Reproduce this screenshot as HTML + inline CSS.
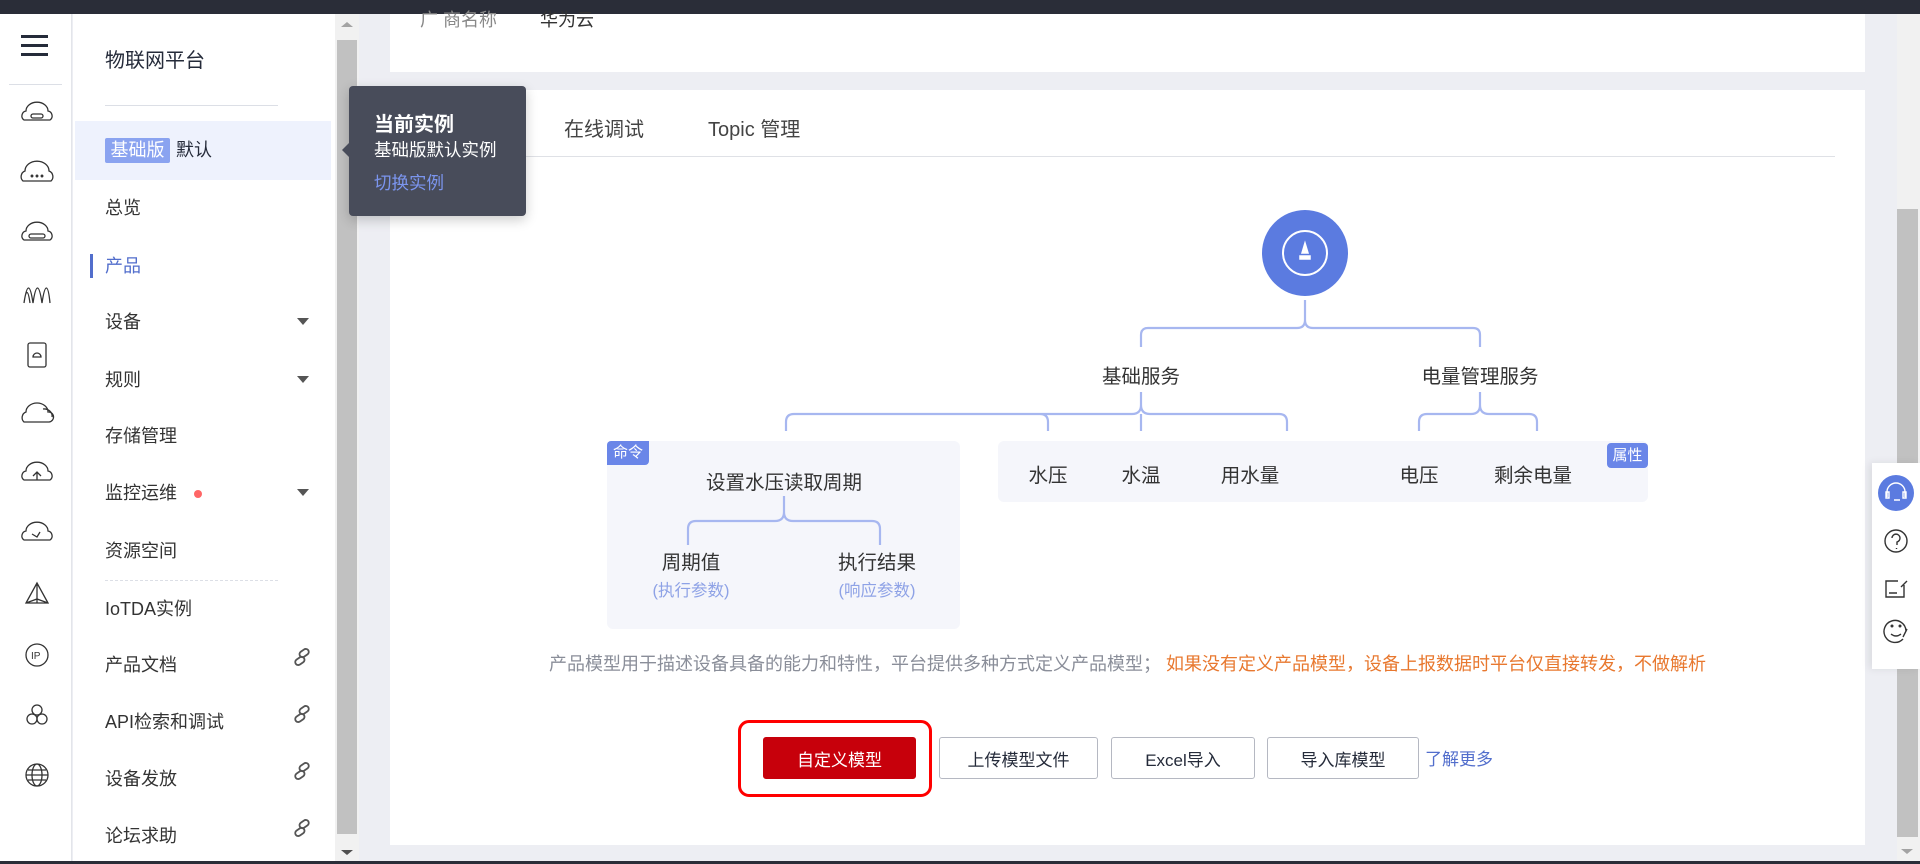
<!DOCTYPE html>
<html><head><meta charset="utf-8"><style>
*{margin:0;padding:0;box-sizing:border-box}
body{width:1920px;height:864px;overflow:hidden;background:#edeef3;font-family:"Liberation Sans","Noto Sans CJK SC",sans-serif;color:#333;position:relative}
.a{position:absolute}
.nav div.it{position:absolute;left:105px;font-size:18px;color:#333;line-height:24px}
.caret{position:absolute;left:297px;width:0;height:0;border-left:6px solid transparent;border-right:6px solid transparent;border-top:7px solid #555}
.btn{position:absolute;top:737px;height:42px;border:1px solid #b5b8c2;border-radius:3px;background:#fff;font-size:17px;color:#252b3a;display:flex;align-items:center;justify-content:center}
.t{position:absolute;font-size:19.5px;color:#333;white-space:nowrap;transform:translateX(-50%)}
</style></head><body>
<div class="a" style="left:0;top:0;width:1920px;height:14px;background:#2a2d38"></div>
<div class="a" style="left:0;top:861px;width:1920px;height:3px;background:#2a2d38"></div>
<!-- icon rail -->
<div class="a" style="left:0;top:14px;width:72px;height:847px;background:#fff;border-right:1px solid #e3e5ea"></div>
<div class="a" style="left:21px;top:35px;width:27px;height:3px;background:#252b3a;box-shadow:0 9px 0 #252b3a,0 18px 0 #252b3a"></div>
<div class="a" style="left:9px;top:84px;width:53px;height:1px;background:#dcdfe6"></div>
<svg class="a" style="left:0;top:0" width="72" height="864" fill="none" stroke="#333" stroke-width="1.3">
<g transform="translate(37,115)"><path d="M-13,5 a5,5 0 0 1 2,-9 a10,8 0 0 1 22,0 a5,5 0 0 1 2,9 z"/><rect x="-6" y="-1" width="12" height="4" rx="2"/></g>
<g transform="translate(37,175)"><path d="M-14,6 a6,6 0 0 1 2,-10 a11,9 0 0 1 24,0 a6,6 0 0 1 2,10 z"/><circle cx="-5" cy="1" r=".8"/><circle cx="0" cy="1" r=".8"/><circle cx="5" cy="1" r=".8"/></g>
<g transform="translate(37,235)"><path d="M-13,5 a5,5 0 0 1 2,-9 a10,8 0 0 1 22,0 a5,5 0 0 1 2,9 z"/><rect x="-8" y="-1" width="16" height="4" rx="2"/></g>
<g transform="translate(37,295)"><path d="M-13,8 C-10,-12 -7,-12 -4,8 C-1,-12 2,-12 5,8 C8,-12 11,-12 13,8 M-13,8 C-11,-6 -9,-6 -7,8"/></g>
<g transform="translate(37,355)"><rect x="-9" y="-12" width="18" height="24" rx="2"/><path d="M-4,2 a3,3 0 0 1 8,0 z"/></g>
<g transform="translate(37,415)"><path d="M-13,7 a6,6 0 0 1 2,-10 a11,9 0 0 1 22,0 a5,5 0 0 1 1,10 z M6,-6 a8,7 0 0 1 9,8"/></g>
<g transform="translate(37,475)"><path d="M-13,5 a5,5 0 0 1 2,-9 a10,8 0 0 1 22,0 a5,5 0 0 1 2,9 z M0,5 v-7 M-4,1 l4,-4 l4,4"/></g>
<g transform="translate(37,535)"><path d="M-13,5 a5,5 0 0 1 2,-9 a10,8 0 0 1 22,0 a5,5 0 0 1 2,9 z M-5,-1 l5,3 l3,-5"/></g>
<g transform="translate(37,595)"><path d="M0,-12 L-11,8 L11,8 Z M0,-12 V8 M-11,8 L0,4 L11,8"/></g>
<g transform="translate(37,655)"><circle r="11"/><text x="-6" y="4" font-size="10" fill="#333" stroke="none" font-family="Liberation Sans">IP</text></g>
<g transform="translate(37,715)"><circle cx="0" cy="-5" r="5"/><circle cx="-5" cy="4" r="5"/><circle cx="5" cy="4" r="5"/></g>
<g transform="translate(37,775)"><circle r="11"/><ellipse rx="5" ry="11"/><path d="M-11,0 H11 M-9,-5 H9 M-9,5 H9"/></g>
</svg>
<!-- nav panel -->
<div class="a nav" style="left:73px;top:14px;width:262px;height:847px;background:#fff">
</div>
<div class="nav">
<div class="a" style="left:105px;top:44px;font-size:20px;color:#252b3a">物联网平台</div>
<div class="a" style="left:105px;top:105px;width:173px;height:1px;background:#dcdfe6"></div>
<div class="a" style="left:75px;top:121px;width:256px;height:59px;background:#eef2fd"></div>
<div class="a" style="left:105px;top:138px;width:65px;height:25px;background:#8aa3f0;border-radius:2px;color:#fff;font-size:18px;text-align:center;line-height:25px">基础版</div>
<div class="a" style="left:176px;top:138px;font-size:18px;line-height:25px;color:#252b3a">默认</div>
<div class="it" style="top:196px">总览</div>
<div class="a" style="left:90px;top:254px;width:3px;height:24px;background:#526ecc"></div>
<div class="it" style="top:254px;color:#526ecc">产品</div>
<div class="it" style="top:310px">设备</div><div class="caret" style="top:318px"></div>
<div class="it" style="top:368px">规则</div><div class="caret" style="top:376px"></div>
<div class="it" style="top:424px">存储管理</div>
<div class="it" style="top:481px">监控运维</div><div class="a" style="left:194px;top:490px;width:8px;height:8px;border-radius:50%;background:#f66"></div><div class="caret" style="top:489px"></div>
<div class="it" style="top:539px">资源空间</div>
<div class="a" style="left:105px;top:580px;width:173px;border-top:1px dashed #dcdfe6"></div>
<div class="it" style="top:597px">IoTDA实例</div>
<div class="it" style="top:653px">产品文档</div>
<div class="it" style="top:710px">API检索和调试</div>
<div class="it" style="top:767px">设备发放</div>
<div class="it" style="top:824px">论坛求助</div>
<svg class="a" style="left:290px;top:0" width="24" height="864" fill="none" stroke="#555" stroke-width="1.8">
<g id="lk" transform="translate(12,657)"><rect x="-9" y="-1" width="10" height="6" rx="3" transform="rotate(-35)"/><rect x="-1" y="-5" width="10" height="6" rx="3" transform="rotate(-35)"/></g>
<use href="#lk" y="57"/><use href="#lk" y="114"/><use href="#lk" y="171"/>
</svg>
</div>
<!-- left scrollbar -->
<div class="a" style="left:335px;top:14px;width:24px;height:847px;background:#f1f1f1"></div>
<div class="a" style="left:337px;top:40px;width:20px;height:794px;background:#c1c1c1"></div>
<div class="a" style="left:341px;top:22px;border-left:6px solid transparent;border-right:6px solid transparent;border-bottom:5px solid #a3a3a3"></div>
<div class="a" style="left:341px;top:850px;border-left:6px solid transparent;border-right:6px solid transparent;border-top:5px solid #505050"></div>
<!-- cards -->
<div class="a" style="left:390px;top:14px;width:1475px;height:58px;background:#fff"></div>
<div class="a" style="left:420px;top:6px;font-size:18px;color:#888">广 商名称</div>
<div class="a" style="left:540px;top:6px;font-size:18px;color:#333">华为云</div>
<div class="a" style="left:390px;top:90px;width:1475px;height:755px;background:#fff"></div>
<div class="a" style="left:564px;top:113px;font-size:20px;color:#444">在线调试</div>
<div class="a" style="left:708px;top:113px;font-size:20px;color:#444">Topic 管理</div>
<div class="a" style="left:390px;top:156px;width:1445px;height:1px;background:#dfe1e6"></div>
<!-- tree -->
<div class="a" style="left:607px;top:441px;width:353px;height:188px;background:#f5f6fb;border-radius:6px"></div>
<div class="a" style="left:607px;top:441px;width:42px;height:24px;background:#6a86e8;border-radius:4px 0 4px 0;color:#fff;font-size:15px;text-align:center;line-height:24px">命令</div>
<div class="a" style="left:998px;top:441px;width:650px;height:61px;background:#f5f6fb;border-radius:6px"></div>
<div class="a" style="left:1607px;top:443px;width:41px;height:25px;background:#6a86e8;border-radius:4px;color:#fff;font-size:15px;text-align:center;line-height:25px">属性</div>
<svg class="a" style="left:0;top:0" width="1920" height="864" fill="none" stroke="#a7b7f0" stroke-width="2.2">
<circle cx="1305" cy="253" r="43" fill="#5b7be0" stroke="none"/>
<circle cx="1305" cy="253" r="22" stroke="#fff" stroke-width="2"/>
<path d="M1305,243 l-3,10 h6 z M1300,256 h10 v3 h-10z" stroke="#fff" stroke-width="1.5" fill="#fff"/>
<path d="M1305,300 V320 q0,8 -8,8 H1148 q-7,0 -7,7 V347 M1305,320 q0,8 8,8 H1473 q7,0 7,7 V347"/>
<path d="M1141,392 V405 q0,9 -9,9 H794 q-8,0 -8,8 V431 M1141,405 q0,9 9,9 H1279 q8,0 8,8 V431 M1141,414 V431 M1048,422 q0,-8 -8,-8 M1048,422 V431"/>
<path d="M1480,392 V405 q0,9 -9,9 H1427 q-8,0 -8,8 V431 M1480,405 q0,9 9,9 H1529 q8,0 8,8 V431"/>
<path d="M784,496 V512 q0,9 -9,9 H696 q-8,0 -8,8 V545 M784,512 q0,9 9,9 H872 q8,0 8,8 V545"/>
</svg>
<div class="t" style="left:1141px;top:360px">基础服务</div>
<div class="t" style="left:1480px;top:360px">电量管理服务</div>
<div class="t" style="left:784px;top:466px">设置水压读取周期</div>
<div class="t" style="left:691px;top:546px">周期值</div>
<div class="t" style="left:691px;top:577px;color:#8ea2e6;font-size:16.5px">(执行参数)</div>
<div class="t" style="left:877px;top:546px">执行结果</div>
<div class="t" style="left:877px;top:577px;color:#8ea2e6;font-size:16.5px">(响应参数)</div>
<div class="t" style="left:1048px;top:459px">水压</div>
<div class="t" style="left:1141px;top:459px">水温</div>
<div class="t" style="left:1250px;top:459px">用水量</div>
<div class="t" style="left:1419px;top:459px">电压</div>
<div class="t" style="left:1533px;top:459px">剩余电量</div>
<div class="a" style="left:549px;top:650px;font-size:18px;color:#8a8e99;white-space:nowrap">产品模型用于描述设备具备的能力和特性，平台提供多种方式定义产品模型；<span style="color:#e8782f"> 如果没有定义产品模型，设备上报数据时平台仅直接转发，不做解析</span></div>
<div class="a" style="left:738px;top:720px;width:194px;height:77px;border:3px solid #f00;border-radius:11px"></div>
<div class="btn" style="left:763px;width:153px;background:#c7000b;border-color:#c7000b;color:#fff">自定义模型</div>
<div class="btn" style="left:939px;width:159px">上传模型文件</div>
<div class="btn" style="left:1111px;width:144px">Excel导入</div>
<div class="btn" style="left:1267px;width:152px">导入库模型</div>
<div class="a" style="left:1425px;top:745px;font-size:17px;color:#526ecc">了解更多</div>
<!-- right scrollbar -->
<div class="a" style="left:1897px;top:14px;width:23px;height:847px;background:#f1f1f1"></div>
<div class="a" style="left:1897px;top:209px;width:21px;height:628px;background:#c1c1c1"></div>
<div class="a" style="left:1901px;top:849px;border-left:6px solid transparent;border-right:6px solid transparent;border-top:5px solid #a3a3a3"></div>
<!-- float panel -->
<div class="a" style="left:1872px;top:463px;width:48px;height:206px;background:#fff;box-shadow:-3px 0 8px rgba(0,0,0,.08)"></div>
<svg class="a" style="left:1872px;top:463px" width="48" height="206" fill="none" stroke="#333" stroke-width="1.4">
<circle cx="24" cy="30" r="18" fill="#5b7be0" stroke="none"/>
<path d="M15,34 v-5 a9,9 0 0 1 18,0 v5 M14,29 h3 v6 h-3z M31,29 h3 v6 h-3z M22,37 h6" stroke="#fff"/>
<circle cx="24" cy="78" r="11"/><path d="M20,75 a4,4 0 1 1 5,4 v3 M24.5,85 v1"/>
<path d="M32,122 v12 h-18 v-16 h12 M17,130 h8 M29,124 l6,-6"/>
<path d="M34,168 a11,11 0 1 0 -3,8 M19,171 q5,4 10,0 M35,166 l-4,8" /><circle cx="20" cy="163" r=".8"/><circle cx="28" cy="163" r=".8"/>
</svg>
<!-- tooltip -->
<div class="a" style="left:349px;top:86px;width:177px;height:130px;background:#484c5a;border-radius:4px;box-shadow:0 4px 12px rgba(0,0,0,.2)"></div>
<div class="a" style="left:342px;top:143px;border-top:7px solid transparent;border-bottom:7px solid transparent;border-right:7px solid #484c5a"></div>
<div class="a" style="left:374px;top:108px;font-size:20px;font-weight:bold;color:#fff">当前实例</div>
<div class="a" style="left:374px;top:137px;font-size:17.5px;color:#fff">基础版默认实例</div>
<div class="a" style="left:374px;top:170px;font-size:17.5px;color:#7b95ee">切换实例</div>
</body></html>
